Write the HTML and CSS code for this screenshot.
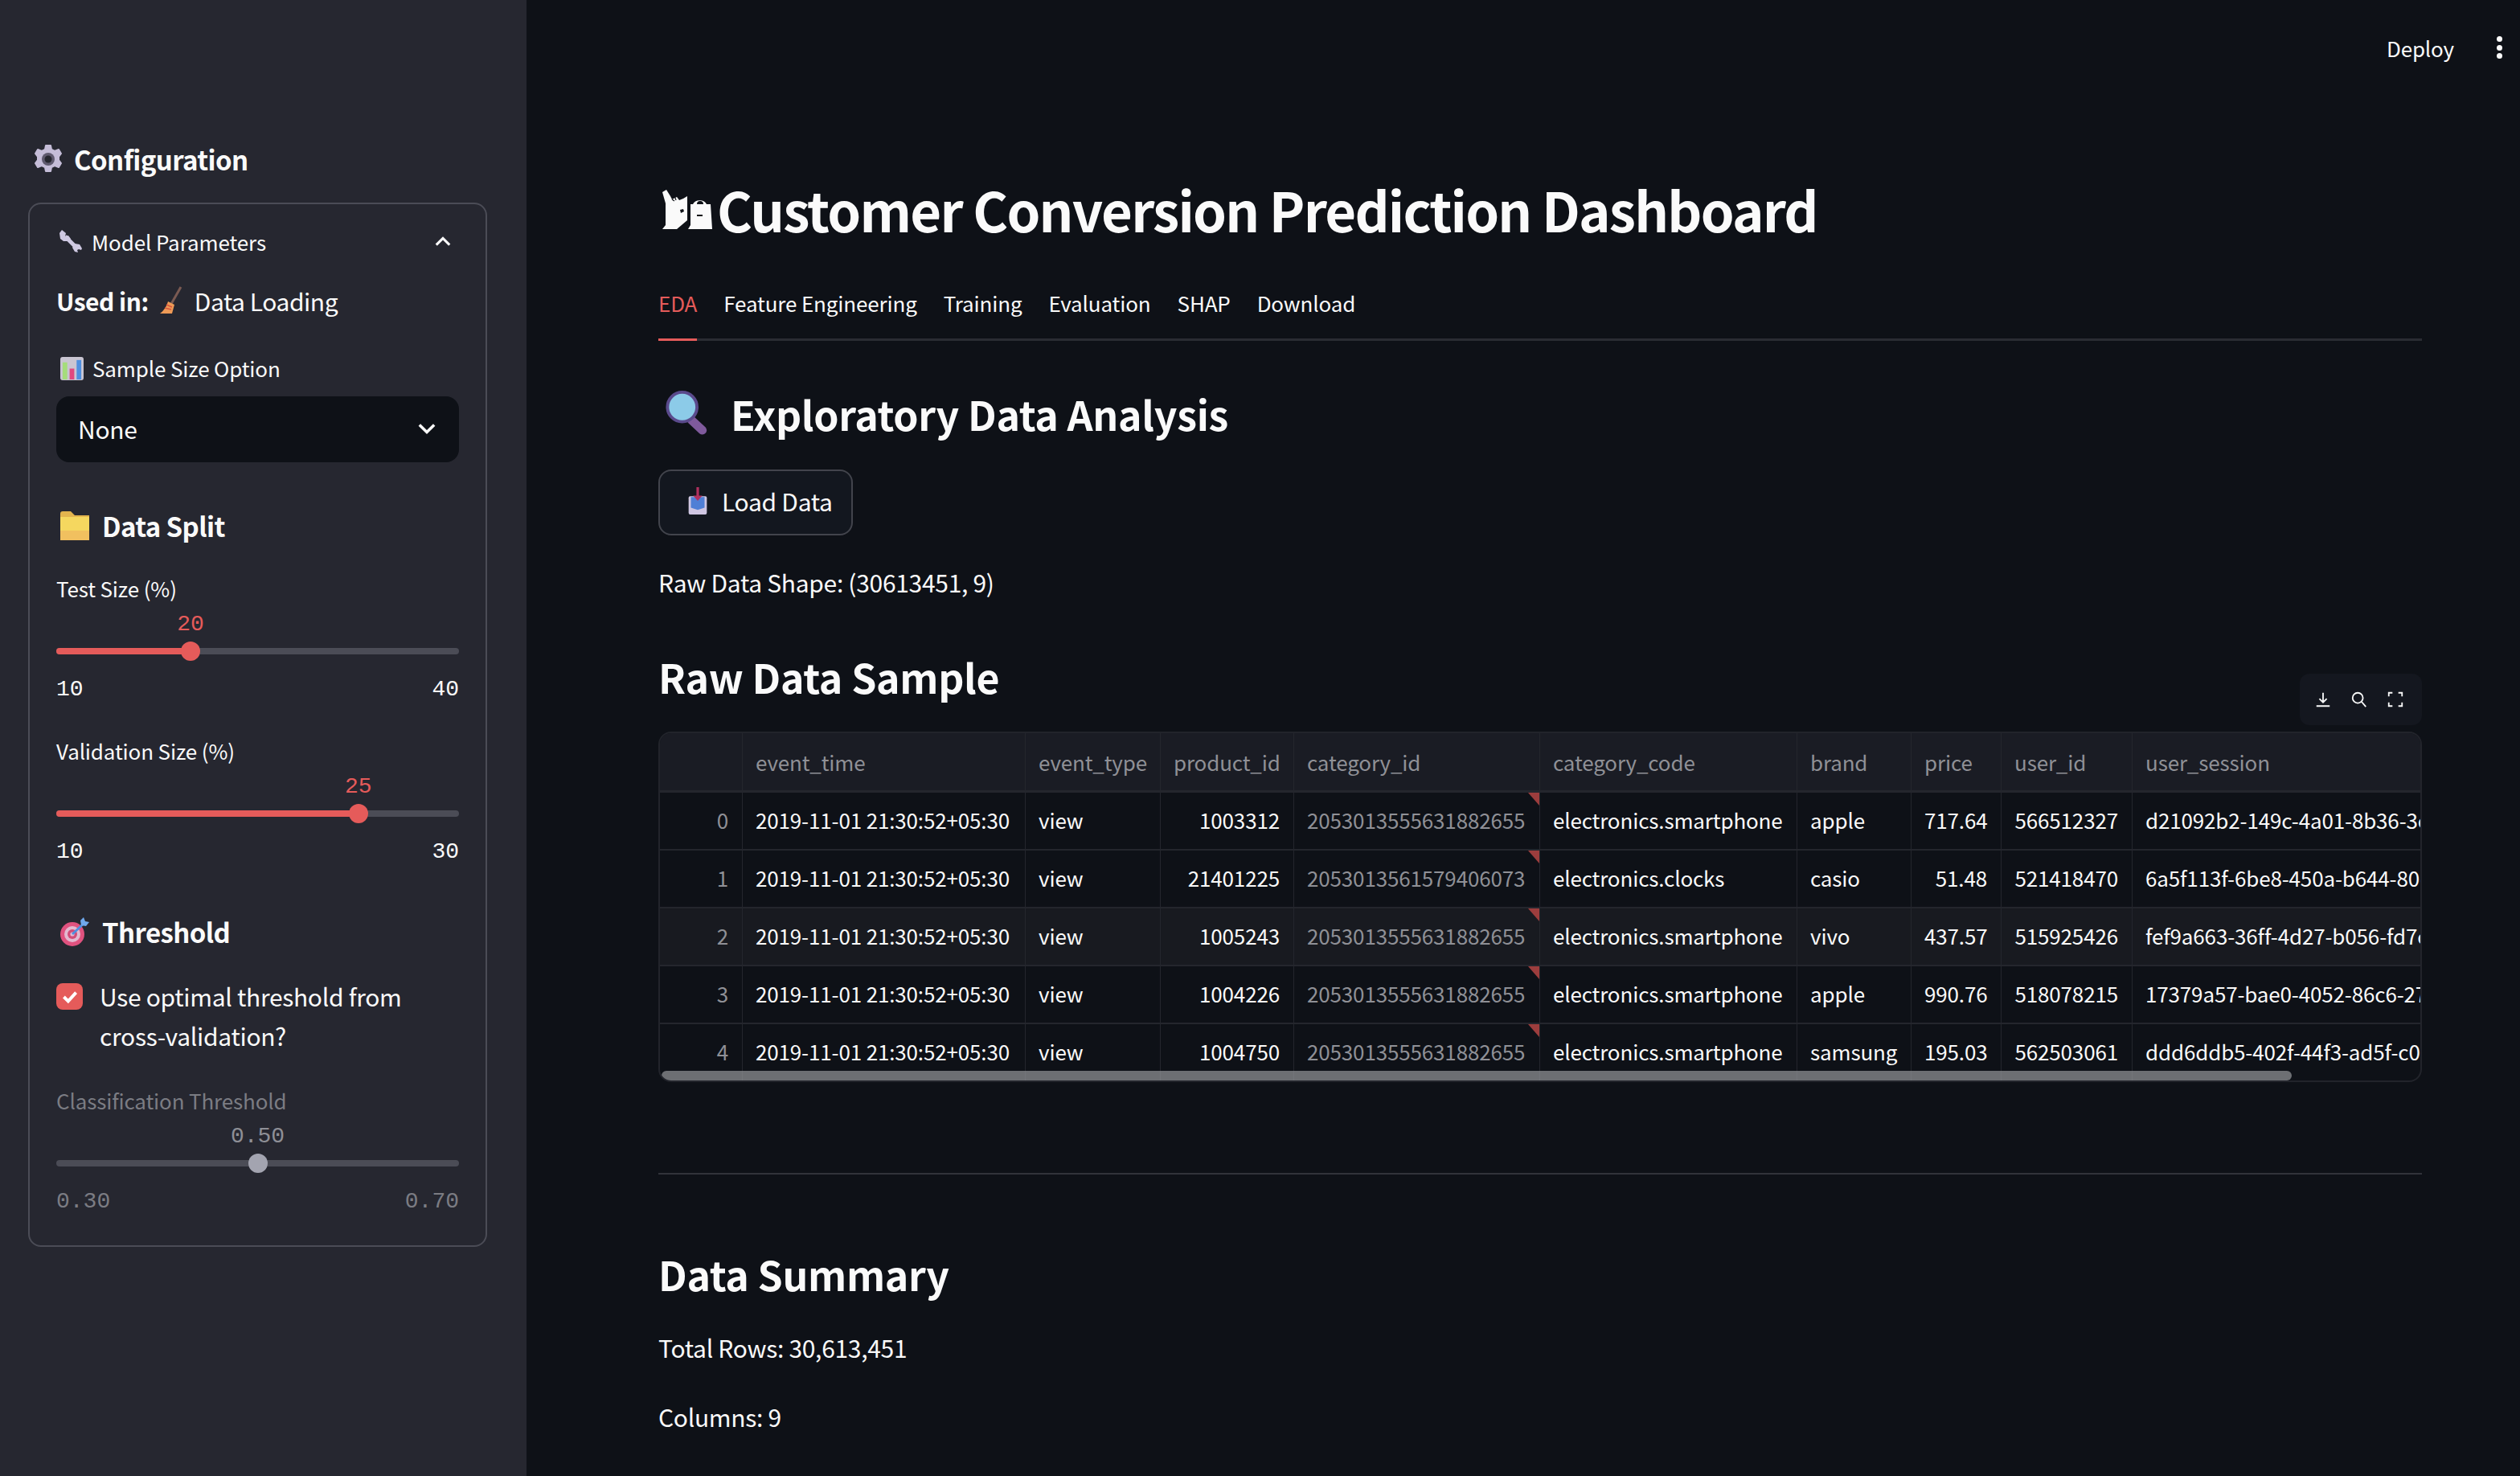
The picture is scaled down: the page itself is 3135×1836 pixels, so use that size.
FILE: index.html
```html
<!DOCTYPE html>
<html lang="en">
<head>
<meta charset="utf-8">
<title>Customer Conversion Prediction Dashboard</title>
<link rel="stylesheet" href="styles.css">
</head>
<body>
<div class="app">
  <aside class="sidebar">
    <div class="side-title">
      <svg class="ic-gear" viewBox="0 0 36 36"><path fill="#c5bdd8" d="M15 1h6l1 5 4 2 5-2 3 5-3 4v4l3 4-3 5-5-2-4 2-1 5h-6l-1-5-4-2-5 2-3-5 3-4v-4l-3-4 3-5 5 2 4-2z" stroke="#c5bdd8" stroke-width="2" stroke-linejoin="round"/><circle cx="18" cy="18" r="8" fill="#5f5a6e"/><circle cx="18" cy="18" r="4.5" fill="#26272f"/></svg>
      <span>Configuration</span>
    </div>
    <section class="expander">
      <div class="exp-head">
        <svg class="ic-wrench" viewBox="0 0 28 28"><path d="M7 8l15 15" stroke="#cfc9e2" stroke-width="5" fill="none"/><path fill="#cfc9e2" d="M3 0l5 4-1 4 4-1 3 4-3 3-6 0-4-3-1-7z"/><path fill="#cfc9e2" d="M19 17l6 1 3 5-1 2-3-1-2 1 1 3-4-1-3-5z"/></svg>
        <span class="exp-title">Model Parameters</span>
        <svg class="chev" viewBox="0 0 24 24"><path d="M3 17l9-9 9 9" fill="none" stroke="#fafafa" stroke-width="3.4"/></svg>
      </div>
      <p class="used"><b>Used in:</b>
        <svg class="ic-broom" viewBox="0 0 30 36"><path d="M27 1L15 22" stroke="#7a5a52" stroke-width="3" fill="none"/><path fill="#ee9a56" d="M11 19l8 4-3 11H1c4-3 8-8 10-15z"/><path d="M7 27l8 2M9 23l7 3" stroke="#d8553d" stroke-width="1.6"/></svg>
        <span>Data Loading</span></p>
      <div class="label ic-label">
        <svg class="ic-chart" viewBox="0 0 30 30"><rect width="30" height="30" rx="3" fill="#c9c5d2"/><rect x="3" y="7" width="6" height="22" fill="#a5dd7b"/><rect x="12" y="15" width="6" height="14" fill="#e0487f"/><rect x="21" y="4" width="6" height="25" fill="#4f8fe0"/></svg>
        <span>Sample Size Option</span>
      </div>
      <div class="select">
        <span>None</span>
        <svg class="chev-down" viewBox="0 0 24 24"><path d="M2 7l10 10 10-10" fill="none" stroke="#fafafa" stroke-width="3.8"/></svg>
      </div>
      <h3 class="side-h split">
        <svg class="ic-folder" viewBox="0 0 36 36"><path fill="#e3b44e" d="M0 3a3 3 0 013-3h10l5 5h18v6H0z"/><path fill="#f5d75f" d="M0 7h36v29H0z"/><path fill="#f0b65f" d="M0 24h36v12H0z" opacity=".7"/></svg>
        Data Split
      </h3>
      <div class="label sl-label">Test Size (%)</div>
      <div class="slider">
        <div class="sl-value red pos-33">20</div>
        <div class="track"><div class="fill pos-33"></div><div class="thumb pos-33"></div></div>
        <div class="sl-ends"><span>10</span><span>40</span></div>
      </div>
      <div class="label sl-label second">Validation Size (%)</div>
      <div class="slider">
        <div class="sl-value red pos-75">25</div>
        <div class="track"><div class="fill pos-75"></div><div class="thumb pos-75"></div></div>
        <div class="sl-ends"><span>10</span><span>30</span></div>
      </div>
      <h3 class="side-h thresh">
        <svg class="ic-target" viewBox="0 0 36 36"><circle cx="15" cy="21" r="15" fill="#e0527f"/><circle cx="15" cy="21" r="10" fill="#e3b9d0"/><circle cx="15" cy="21" r="6" fill="#d24d78"/><circle cx="15" cy="21" r="2.6" fill="#e3b9d0"/><path d="M15 21L31 6" stroke="#4f8fe0" stroke-width="3"/><path d="M25 4l4-4 2 5 5 1-4 5-6-1z" fill="#6fa8ec"/></svg>
        Threshold
      </h3>
      <label class="check">
        <span class="box"><svg viewBox="0 0 24 24"><path d="M5 12l5 5 9-10" fill="none" stroke="#fff" stroke-width="3.6"/></svg></span>
        <span>Use optimal threshold from cross-validation?</span>
      </label>
      <div class="label sl-label dim">Classification Threshold</div>
      <div class="slider disabled">
        <div class="sl-value grey pos-50">0.50</div>
        <div class="track"><div class="thumb pos-50"></div></div>
        <div class="sl-ends"><span>0.30</span><span>0.70</span></div>
      </div>
    </section>
  </aside>

  <main class="main">
    <header class="topbar">
      <span class="deploy">Deploy</span>
      <span class="dots"><i></i><i></i><i></i></span>
    </header>
    <div class="content">
      <h1 class="title">
        <svg class="ic-title" viewBox="0 0 62 49"><path fill="#fafafa" d="M0 3L5 0l5 8 2 4 6-3 3 4 5-2 5-3v6 24L18 49H0l4-5V17z"/><path fill="#fafafa" d="M32 49l3-5V18h3a9 7 0 0117 0h5l2 31z"/><path d="M43 18a4 4 0 018 0z" fill="#0e1117"/><rect x="43" y="31" width="7" height="2" fill="#0e1117"/><path d="M22 25l4-1 1 3-4 2z" fill="#0e1117"/><path d="M12 12l3 2M16 10l1 3" stroke="#0e1117" stroke-width="1.2"/></svg>
        <span>Customer Conversion Prediction Dashboard</span>
      </h1>
      <nav class="tabs">
        <span class="tab active">EDA</span><span class="tab">Feature Engineering</span><span class="tab">Training</span><span class="tab">Evaluation</span><span class="tab">SHAP</span><span class="tab">Download</span>
      </nav>
      <h2 class="h-eda">
        <svg class="ic-mag" viewBox="0 0 54 58"><path d="M33 38l14 13" stroke="#7f5a9c" stroke-width="11" stroke-linecap="round"/><circle cx="21" cy="21" r="19" fill="#8ccbe8" stroke="#5a4a8c" stroke-width="4"/></svg>
        Exploratory Data Analysis
      </h2>
      <button class="btn" type="button">
        <svg class="ic-inbox" viewBox="0 0 26 36"><rect x="1" y="12" width="24" height="24" rx="2" fill="#cfc6e2"/><path d="M4 13h18v14l-9 3-9-3z" fill="#4f7fd6"/><path d="M13 0v14" stroke="#b0305f" stroke-width="3.4"/><path d="M7 11h12l-6 7z" fill="#b0305f"/></svg>
        <span>Load Data</span>
      </button>
      <p class="para shape">Raw Data Shape: (30613451, 9)</p>
      <div class="h-row">
        <h2 class="h-raw">Raw Data Sample</h2>
      </div>
      <div class="frame">
        <div class="toolbar">
          <svg viewBox="0 0 24 24"><path d="M12 3v13M7 11l5 5 5-5M3 21h18" fill="none" stroke="#fafafa" stroke-width="2"/></svg>
          <svg viewBox="0 0 24 24"><circle cx="10" cy="10" r="7" fill="none" stroke="#fafafa" stroke-width="2"/><path d="M15 15l6 7" stroke="#fafafa" stroke-width="2"/></svg>
          <svg viewBox="0 0 24 24"><path d="M3 8V3h5M16 3h5v5M21 16v5h-5M8 21H3v-5" fill="none" stroke="#fafafa" stroke-width="2"/></svg>
        </div>
        <div class="table">
          <div class="row head"><span class="c idx"></span><span class="c">event_time</span><span class="c">event_type</span><span class="c">product_id</span><span class="c">category_id</span><span class="c">category_code</span><span class="c">brand</span><span class="c">price</span><span class="c">user_id</span><span class="c">user_session</span></div>
          <div class="row"><span class="c idx">0</span><span class="c">2019-11-01 21:30:52+05:30</span><span class="c">view</span><span class="c num">1003312</span><span class="c cat">2053013555631882655</span><span class="c">electronics.smartphone</span><span class="c">apple</span><span class="c num">717.64</span><span class="c num">566512327</span><span class="c">d21092b2-149c-4a01-8b36-3c0a1d6e7f21</span></div>
          <div class="row"><span class="c idx">1</span><span class="c">2019-11-01 21:30:52+05:30</span><span class="c">view</span><span class="c num">21401225</span><span class="c cat">2053013561579406073</span><span class="c">electronics.clocks</span><span class="c">casio</span><span class="c num">51.48</span><span class="c num">521418470</span><span class="c">6a5f113f-6be8-450a-b644-80c1d2e3f4a5</span></div>
          <div class="row alt"><span class="c idx">2</span><span class="c">2019-11-01 21:30:52+05:30</span><span class="c">view</span><span class="c num">1005243</span><span class="c cat">2053013555631882655</span><span class="c">electronics.smartphone</span><span class="c">vivo</span><span class="c num">437.57</span><span class="c num">515925426</span><span class="c">fef9a663-36ff-4d27-b056-fd7c1a2b3c4d</span></div>
          <div class="row"><span class="c idx">3</span><span class="c">2019-11-01 21:30:52+05:30</span><span class="c">view</span><span class="c num">1004226</span><span class="c cat">2053013555631882655</span><span class="c">electronics.smartphone</span><span class="c">apple</span><span class="c num">990.76</span><span class="c num">518078215</span><span class="c">17379a57-bae0-4052-86c6-27a1b2c3d4e5</span></div>
          <div class="row"><span class="c idx">4</span><span class="c">2019-11-01 21:30:52+05:30</span><span class="c">view</span><span class="c num">1004750</span><span class="c cat">2053013555631882655</span><span class="c">electronics.smartphone</span><span class="c">samsung</span><span class="c num">195.03</span><span class="c num">562503061</span><span class="c">ddd6ddb5-402f-44f3-ad5f-c0a1b2c3d4e5</span></div>
          <div class="scrollbar"></div>
        </div>
      </div>
      <hr class="rule">
      <h2 class="h-sum">Data Summary</h2>
      <p class="para rows">Total Rows: 30,613,451</p>
      <p class="para cols">Columns: 9</p>
    </div>
  </main>
</div>
</body>
</html>
```
FILE: styles.css
```css
* { box-sizing: border-box; }
html, body { margin: 0; height: 1836px; overflow: hidden; }
body {
  background: #0e1117;
  color: #fafafa;
  font-family: "Noto Sans CJK SC", "Noto Sans CJK JP", "Noto Sans", sans-serif;
  font-size: 30px;
  letter-spacing: -0.3px;
}
.app { display: flex; height: 1836px; }

/* Sidebar */
.sidebar { width: 655px; flex: none; background: #262730; padding: 176px 49px 0 35px; }
.side-title { display: flex; align-items: center; gap: 14px; padding-left: 7px; height: 44px; font-size: 33px; letter-spacing: -0.6px; font-weight: 700; line-height: 44px; }
.ic-gear { width: 36px; height: 36px; flex: none; }
.expander { margin-top: 32px; height: 1299px; border: 2px solid #4b4c56; border-radius: 16px; padding: 0 33px; }
.exp-head { display: flex; align-items: center; height: 92px; margin-bottom: 2px; font-size: 26px; letter-spacing: -0.1px; padding-left: 4px; }
.ic-wrench { width: 28px; height: 28px; margin-right: 12px; }
.exp-title { flex: 1; }
.chev { width: 22px; height: 22px; margin-right: 9px; }
.used { margin: 8px 0 0; height: 40px; line-height: 40px; display: flex; align-items: center; }
.used b { font-weight: 700; letter-spacing: -0.5px; margin-right: 13px; }
.used span { margin-left: 14px; letter-spacing: -0.45px; }
.ic-broom { width: 30px; height: 36px; }
.label { font-size: 26px; letter-spacing: -0.15px; line-height: 36px; }
.ic-label { display: flex; align-items: center; margin-top: 46px; padding-left: 5px; gap: 11px; }
.ic-chart { width: 29px; height: 29px; }
.select { margin-top: 17px; height: 82px; background: #0e1117; border-radius: 16px; display: flex; align-items: center; justify-content: space-between; padding: 0 29px 2px 27px; }
.chev-down { width: 22px; height: 22px; }
.side-h { margin: 0; font-size: 33px; letter-spacing: -0.6px; font-weight: 700; line-height: 46px; display: flex; align-items: center; gap: 16px; padding-left: 5px; }
.split { margin-top: 56px; }
.ic-folder { width: 36px; height: 36px; }
.ic-target { width: 36px; height: 36px; }
.sl-label { margin-top: 37px; }
.sl-label.second { margin-top: 42px; }
.sl-label.dim { margin-top: 38px; color: #7b7c83; }
.slider { --thumb-color: #e55b5a; }
.sl-value { font-family: "Liberation Mono", monospace; font-size: 28px; letter-spacing: 0; line-height: 28px; margin-top: 13px; width: 56px; text-align: center; }
.sl-value.red { color: #e55b5a; }
.sl-value.grey { color: #8e8f96; width: 90px; }
.sl-value.pos-33 { margin-left: calc(33.33% - 28px); }
.sl-value.pos-75 { margin-left: calc(75% - 28px); }
.sl-value.pos-50 { margin-left: calc(50% - 45px); }
.track { position: relative; height: 8px; border-radius: 4px; background: #4b4c56; margin-top: 15px; }
.fill { height: 8px; border-radius: 4px; background: #e55b5a; }
.fill.pos-33 { width: 33.33%; }
.fill.pos-75 { width: 75%; }
.thumb { position: absolute; top: -8px; width: 24px; height: 24px; border-radius: 50%; background: var(--thumb-color); margin-left: -12px; }
.thumb.pos-33 { left: 33.33%; }
.thumb.pos-75 { left: 75%; }
.thumb.pos-50 { left: 50%; background: #a3a4b0; }
.sl-ends { display: flex; justify-content: space-between; font-family: "Liberation Mono", monospace; font-size: 28px; letter-spacing: 0; line-height: 32px; margin-top: 28px; }
.disabled .sl-ends { color: #7b7c83; }
.thresh { margin-top: 60px; }
.check { display: flex; gap: 21px; margin-top: 33px; line-height: 49px; }
.box { width: 33px; height: 33px; flex: none; margin-top: 8px; border-radius: 8px; background: #e55b5a; display: flex; align-items: center; justify-content: center; }
.box svg { width: 26px; height: 26px; }

/* Main */
.main { flex: 1; min-width: 0; }
.topbar { height: 120px; display: flex; align-items: flex-start; justify-content: flex-end; padding: 38px 22px 0 0; }
.deploy { font-size: 26px; letter-spacing: -0.15px; line-height: 44px; margin-right: 53px; }
.dots { display: flex; flex-direction: column; gap: 3.5px; padding-top: 7px; }
.dots i { display: block; width: 7px; height: 7px; background: #fafafa; border-radius: 50%; }
.content { padding: 0 122px 0 164px; }
.title { margin: 94px 0 0; display: flex; align-items: center; height: 92px; font-size: 67px; letter-spacing: -1.78px; font-weight: 700; line-height: 92px; }
.ic-title { width: 62px; height: 49px; margin-right: 6px; margin-left: 5px; flex: none; }
.tabs { display: flex; gap: 33px; margin-top: 51px; height: 67px; border-bottom: 3px solid #2a2c33; font-size: 26px; letter-spacing: -0.15px; line-height: 36px; }
.tab { height: 67px; padding-top: 2px; }
.tab.active { color: #e55b5a; border-bottom: 3px solid #e55b5a; }
h2 { margin: 0; font-size: 50px; letter-spacing: -0.3px; font-weight: 700; }
.h-eda { display: flex; align-items: center; gap: 26px; margin-top: 56px; height: 68px; line-height: 68px; padding-left: 7px; }
.ic-mag { width: 57px; height: 56px; }
.btn { display: flex; align-items: center; gap: 17px; margin-top: 36px; height: 82px; width: 242px; padding: 0 0 5px 34px; background: #13171f; border: 2px solid #42444c; border-radius: 16px; color: #fafafa; font: inherit; letter-spacing: inherit; }
.ic-inbox { width: 26px; height: 34px; }
.para { margin: 0; line-height: 44px; }
.shape { margin-top: 36px; }
.h-row { margin-top: 61px; height: 68px; }
.h-raw { line-height: 68px; }
.frame { position: relative; margin-top: 35px; }
.toolbar { position: absolute; right: 0; top: -72px; width: 152px; height: 64px; padding-right: 4px; background: #14171f; border-radius: 12px; display: flex; align-items: center; justify-content: center; gap: 23px; }
.toolbar svg { width: 22px; height: 22px; }
.table { position: relative; height: 436px; border: 2px solid #22242b; border-radius: 16px; overflow: hidden; font-size: 26px; letter-spacing: -0.15px; }
.row { display: grid; grid-template-columns: 103px 352px 168px 166px 306px 320px 142px 112px 163px 1fr; height: 72px; border-bottom: 2px solid #24262d; }
.row.head { height: 74px; background: #1a1c24; color: #8f9096; border-bottom-width: 3px; }
.row.head .c { line-height: 71px; }
.row.alt { background: #181a20; }
.c { position: relative; display: block; padding: 0 16px; line-height: 68px; white-space: nowrap; overflow: hidden; border-right: 1px solid #24262d; }
.c:last-child { border-right: 0; }
.idx { text-align: right; color: #8f9096; padding-right: 17px; }
.num { text-align: right; padding-right: 17px; }
.cat { color: #8f9096; }
.row:not(.head) .cat::after { content: ""; position: absolute; top: 0; right: 0; border-top: 16px solid #9c3d3d; border-left: 14px solid transparent; }
.scrollbar { position: absolute; left: 2px; bottom: 0; width: 2028px; height: 12px; border-radius: 6px; background: rgba(150,151,155,.7); }
.rule { border: 0; border-top: 2px solid #31333a; margin: 113px 0 0; }
.h-sum { margin-top: 89px; line-height: 68px; }
.rows { margin-top: 36px; }
.cols { margin-top: 42px; }
```
